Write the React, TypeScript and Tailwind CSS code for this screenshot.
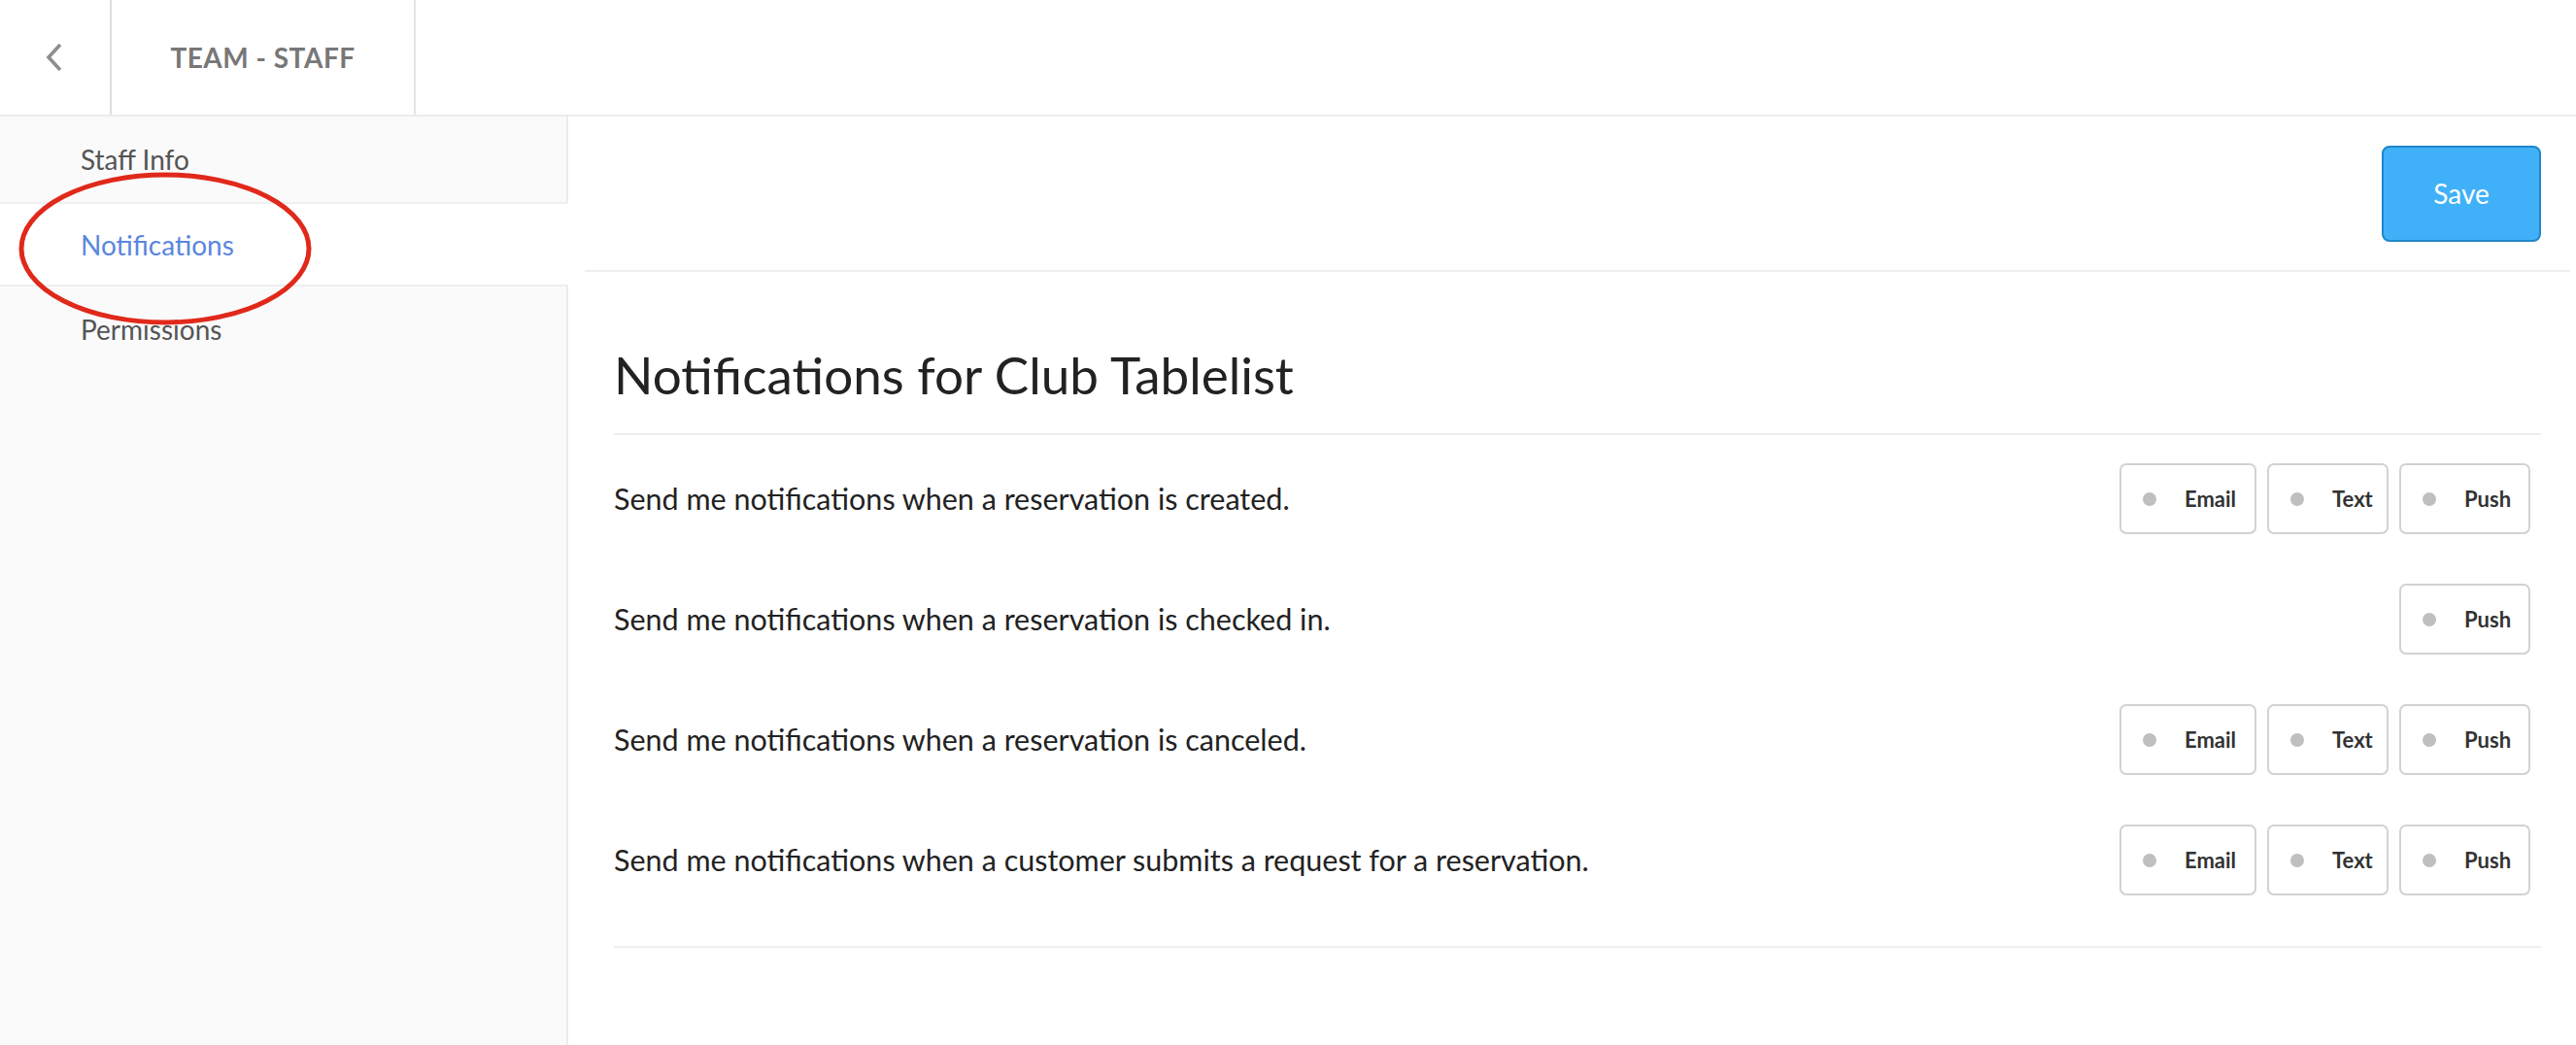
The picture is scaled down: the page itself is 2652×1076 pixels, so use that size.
import { Fragment } from "react";

type Channel = "Email" | "Text" | "Push";

const rows: { label: string; channels: Channel[] }[] = [
  { label: "Send me notifications when a reservation is created.", channels: ["Email", "Text", "Push"] },
  { label: "Send me notifications when a reservation is checked in.", channels: ["Push"] },
  { label: "Send me notifications when a reservation is canceled.", channels: ["Email", "Text", "Push"] },
  {
    label: "Send me notifications when a customer submits a request for a reservation.",
    channels: ["Email", "Text", "Push"],
  },
];

const chipWidth: Record<Channel, string> = {
  Email: "w-[141px]",
  Text: "w-[125px]",
  Push: "w-[135px]",
};

const Chip = ({ channel }: { channel: Channel }) => (
  <button
    className={`${chipWidth[channel]} h-[73px] flex items-center pl-[22px] border-2 border-[#d2d2d2] rounded-[7px] bg-white`}
  >
    <span className="w-[14px] h-[14px] rounded-full bg-[#bfbfbf] shrink-0" />
    <span className="ml-[29px] text-[22px] font-bold text-[#333]">{channel}</span>
  </button>
);

const SideItem = ({ label, active }: { label: string; active?: boolean }) => (
  <div
    className={
      active
        ? "h-[83px] flex items-center pl-[83px] bg-white text-[#5b86de]"
        : "h-[88px] flex items-center pl-[83px] bg-[#fafafa] border-r-2 border-[#ececec] text-[#555]"
    }
  >
    <span className="text-[28px]">{label}</span>
  </div>
);

export default function App() {
  return (
    <div
      className="relative w-[2652px] h-[1076px] bg-white overflow-hidden flex flex-col"
      style={{ fontFamily: "Lato, 'Open Sans', sans-serif" }}
    >
      <header className="h-[120px] shrink-0 flex border-b-2 border-[#ececec]">
        <div className="w-[115px] flex items-center justify-center border-r-2 border-[#dedede]">
          <svg width="20" height="32" viewBox="0 0 20 32" className="-ml-[2px]">
            <polyline points="16,3 4,16 16,29" fill="none" stroke="#8e8e8e" strokeWidth="3.6" />
          </svg>
        </div>
        <div className="w-[313px] flex items-center justify-center border-r-2 border-[#e4e4e4]">
          <span className="text-[28px] font-bold tracking-[0.5px] text-[#777]">TEAM - STAFF</span>
        </div>
      </header>

      <div className="flex flex-1">
        <aside className="w-[585px] shrink-0 flex flex-col">
          <div className="border-b-2 border-[#efefef]">
            <SideItem label="Staff Info" />
          </div>
          <SideItem label="Notifications" active />
          <div className="border-t-2 border-[#efefef]">
            <SideItem label="Permissions" />
          </div>
          <div className="flex-1 bg-[#fafafa] border-r-2 border-[#ececec]" />
        </aside>

        <main className="flex-1 flex flex-col">
          <div className="h-[160px] ml-[17px] mr-[6px] flex items-center justify-end pr-[30px] border-b-2 border-[#efefef]">
            <button className="w-[164px] h-[99px] rounded-[8px] bg-[#40b1f9] border-2 border-[#1f86c9] text-white text-[28px]">
              Save
            </button>
          </div>

          <div className="pl-[47px] pr-[36px]">
            <h1 className="mt-[74px] pb-[28px] text-[53px] leading-[1.2] text-[#222] border-b-2 border-[#efefef]">
              Notifications for Club Tablelist
            </h1>
            <div className="pt-[4px] pb-[26px] border-b-2 border-[#efefef]">
              {rows.map((row) => (
                <div key={row.label} className="h-[124px] flex items-center justify-between">
                  <span className="text-[30.5px] text-[#222]">{row.label}</span>
                  <div className="flex gap-[11px] mr-[11px]">
                    {row.channels.map((c) => (
                      <Fragment key={c}>
                        <Chip channel={c} />
                      </Fragment>
                    ))}
                  </div>
                </div>
              ))}
            </div>
          </div>
        </main>
      </div>

      {/* red annotation circle */}
      <svg className="absolute left-[18px] top-[176px] pointer-events-none" width="304" height="160" viewBox="0 0 304 160">
        <ellipse cx="152" cy="80" rx="148" ry="76" fill="none" stroke="#e0291b" strokeWidth="5" />
      </svg>
    </div>
  );
}
